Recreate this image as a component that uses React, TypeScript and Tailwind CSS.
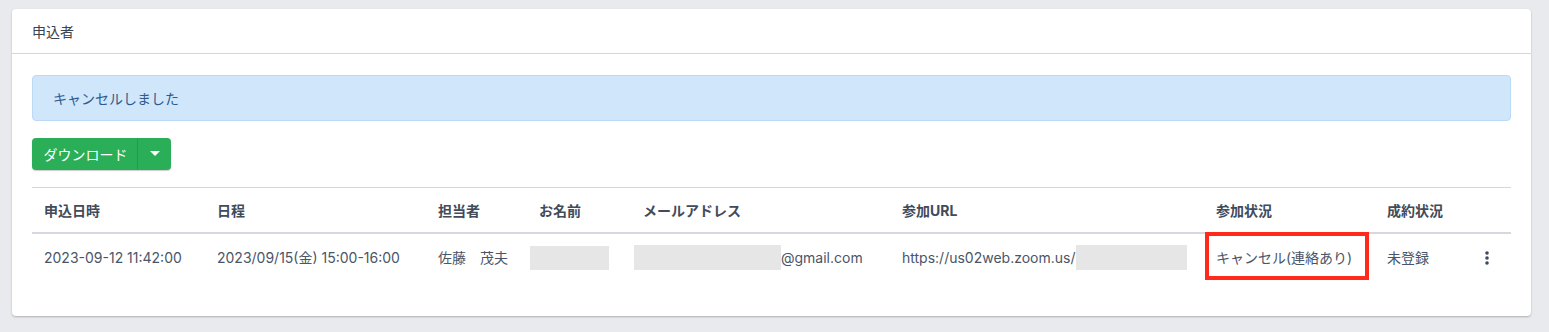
import React from "react";

const cols = [173, 221, 101, 104, 259, 314, 171, 100, 35];

export default function App() {
  const font = { fontFamily: '"Inter", "Noto Sans CJK JP", sans-serif' };
  return (
    <div className="w-[1549px] h-[332px] bg-[#e9eaed] pt-[9px] pl-[12px] pr-[18px] overflow-hidden" style={font}>
      <div className="bg-white rounded-[4px] shadow-[0_1px_2px_rgba(0,0,0,0.25)] h-[307px]">
        <div className="h-[45px] flex items-center pl-[20px] border-b border-[#d3d6db] text-[14px] text-[#3b4350]">
          申込者
        </div>
        <div className="px-[20px] pt-[21px]">
          <div className="h-[46px] rounded-[4px] bg-[#d0e6fb] border border-[#bcd9f5] flex items-center pl-[20px] text-[14px] text-[#2f5a8c]">
            キャンセルしました
          </div>
          <div className="mt-[17px] flex">
            <div className="flex h-[32px] rounded-[4px] bg-[#2aae58] shadow-[0_1px_1px_rgba(0,0,0,0.2)] text-white text-[14px]">
              <div className="w-[106px] flex items-center justify-center pl-[2px] border-r border-[#259a4e]">ダウンロード</div>
              <div className="w-[33px] flex items-center justify-center">
                <svg width="10" height="6" viewBox="0 0 10 6"><path d="M0 0 L10 0 L5 5 Z" fill="white" /></svg>
              </div>
            </div>
          </div>
          <div className="mt-[17px] border-t border-[#d5d8dd]">
            <div className="flex h-[46px] items-center border-b-2 border-[#d5d8dd] text-[14px] font-bold text-[#414b5a]">
              {["申込日時", "日程", "担当者", "お名前", "メールアドレス", "参加URL", "参加状況", "成約状況", ""].map((h, i) => (
                <div key={i} className="pl-[12px] shrink-0" style={{ width: cols[i] }}>{h}</div>
              ))}
            </div>
            <div className="flex h-[47px] items-center text-[14px] text-[#4a5568]">
              <div className="pl-[12px] shrink-0" style={{ width: cols[0] }}>2023-09-12 11:42:00</div>
              <div className="pl-[12px] shrink-0" style={{ width: cols[1] }}>2023/09/15(金) 15:00-16:00</div>
              <div className="pl-[12px] shrink-0 whitespace-pre" style={{ width: cols[2] }}>佐藤　茂夫</div>
              <div className="pl-[3px] shrink-0" style={{ width: cols[3] }}>
                <div className="w-[79px] h-[24px] bg-[#e6e6e6] mt-[1px]"></div>
              </div>
              <div className="pl-[3px] shrink-0 flex items-center" style={{ width: cols[4] }}>
                <div className="w-[147px] h-[25px] bg-[#e6e6e6]"></div>
                <span>@gmail.com</span>
              </div>
              <div className="pl-[12px] shrink-0 flex items-center" style={{ width: cols[5] }}>
                <span>https://us02web.zoom.us/</span>
                <div className="w-[111px] h-[25px] bg-[#e6e6e6]"></div>
              </div>
              <div className="pl-[12px] shrink-0 relative" style={{ width: cols[6] }}>
                <span>キャンセル(連絡あり)</span>
                <div className="absolute left-[1px] top-[-15px] w-[164px] h-[48px] border-[4px] border-[#ff2a1a]"></div>
              </div>
              <div className="pl-[12px] shrink-0" style={{ width: cols[7] }}>未登録</div>
              <div className="pl-[10px] shrink-0 flex" style={{ width: cols[8] }}>
                <svg width="4" height="14" viewBox="0 0 4 14">
                  <circle cx="2" cy="2" r="1.8" fill="#3f4a5c" />
                  <circle cx="2" cy="7" r="1.8" fill="#3f4a5c" />
                  <circle cx="2" cy="12" r="1.8" fill="#3f4a5c" />
                </svg>
              </div>
            </div>
          </div>
        </div>
      </div>
    </div>
  );
}
